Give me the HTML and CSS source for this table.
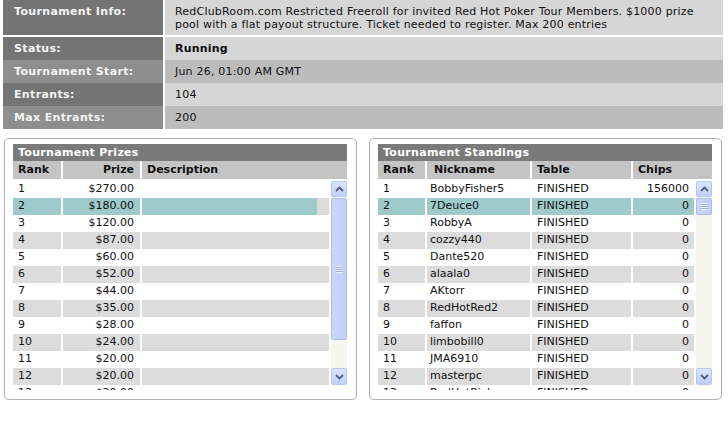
FILE: index.html
```html
<!DOCTYPE html>
<html>
<head>
<meta charset="utf-8">
<link rel="stylesheet" href="styles.css">
</head>
<body>
<div class="info-head">
  <div class="lbl dark">Tournament Info:</div>
  <div class="val light desc">RedClubRoom.com Restricted Freeroll for invited Red Hot Poker Tour Members. $1000 prize pool with a flat payout structure. Ticket needed to register. Max 200 entries</div>
</div>
<div class="info-body">
  <div class="lbl dark">Status:</div>
  <div class="val light bold">Running</div>
  <div class="lbl mid">Tournament Start:</div>
  <div class="val darker">Jun 26, 01:00 AM GMT</div>
  <div class="lbl dark">Entrants:</div>
  <div class="val light">104</div>
  <div class="lbl mid">Max Entrants:</div>
  <div class="val darker">200</div>
</div>

<div class="panels">
  <div class="panel prizes">
    <div class="ptitle">Tournament Prizes</div>
    <div class="cols chead"><div>Rank</div><div class="r">Prize</div><div>Description</div></div>
    <div class="pbody">
      <div class="rows">
        <div class="cols row"><div>1</div><div class="r">$270.00</div><div></div></div>
        <div class="cols row hl part"><div>2</div><div class="r">$180.00</div><div></div></div>
        <div class="cols row"><div>3</div><div class="r">$120.00</div><div></div></div>
        <div class="cols row g"><div>4</div><div class="r">$87.00</div><div></div></div>
        <div class="cols row"><div>5</div><div class="r">$60.00</div><div></div></div>
        <div class="cols row g"><div>6</div><div class="r">$52.00</div><div></div></div>
        <div class="cols row"><div>7</div><div class="r">$44.00</div><div></div></div>
        <div class="cols row g"><div>8</div><div class="r">$35.00</div><div></div></div>
        <div class="cols row"><div>9</div><div class="r">$28.00</div><div></div></div>
        <div class="cols row g"><div>10</div><div class="r">$24.00</div><div></div></div>
        <div class="cols row"><div>11</div><div class="r">$20.00</div><div></div></div>
        <div class="cols row g"><div>12</div><div class="r">$20.00</div><div></div></div>
        <div class="cols row"><div>13</div><div class="r">$20.00</div><div></div></div>
      </div>
      <div class="sbar">
        <div class="sbtn"><svg width="9" height="6" viewBox="0 0 9 6"><polyline points="1,5 4.5,1.5 8,5" fill="none" stroke="#4d6185" stroke-width="1.8"/></svg></div>
        <div class="thumb big"><span class="grip"></span></div>
        <div class="track"></div>
        <div class="sbtn"><svg width="9" height="6" viewBox="0 0 9 6"><polyline points="1,1 4.5,4.5 8,1" fill="none" stroke="#4d6185" stroke-width="1.8"/></svg></div>
      </div>
    </div>
  </div>

  <div class="panel standings">
    <div class="ptitle">Tournament Standings</div>
    <div class="cols chead"><div>Rank</div><div class="nick">Nickname</div><div>Table</div><div>Chips</div></div>
    <div class="pbody">
      <div class="rows">
        <div class="cols row"><div>1</div><div>BobbyFisher5</div><div>FINISHED</div><div class="r">156000</div></div>
        <div class="cols row hl"><div>2</div><div>7Deuce0</div><div>FINISHED</div><div class="r">0</div></div>
        <div class="cols row"><div>3</div><div>RobbyA</div><div>FINISHED</div><div class="r">0</div></div>
        <div class="cols row g"><div>4</div><div>cozzy440</div><div>FINISHED</div><div class="r">0</div></div>
        <div class="cols row"><div>5</div><div>Dante520</div><div>FINISHED</div><div class="r">0</div></div>
        <div class="cols row g"><div>6</div><div>alaala0</div><div>FINISHED</div><div class="r">0</div></div>
        <div class="cols row"><div>7</div><div>AKtorr</div><div>FINISHED</div><div class="r">0</div></div>
        <div class="cols row g"><div>8</div><div>RedHotRed2</div><div>FINISHED</div><div class="r">0</div></div>
        <div class="cols row"><div>9</div><div>faffon</div><div>FINISHED</div><div class="r">0</div></div>
        <div class="cols row g"><div>10</div><div>limbobill0</div><div>FINISHED</div><div class="r">0</div></div>
        <div class="cols row"><div>11</div><div>JMA6910</div><div>FINISHED</div><div class="r">0</div></div>
        <div class="cols row g"><div>12</div><div>masterpc</div><div>FINISHED</div><div class="r">0</div></div>
        <div class="cols row"><div>13</div><div>RedHotRich</div><div>FINISHED</div><div class="r">0</div></div>
      </div>
      <div class="sbar">
        <div class="sbtn"><svg width="9" height="6" viewBox="0 0 9 6"><polyline points="1,5 4.5,1.5 8,5" fill="none" stroke="#4d6185" stroke-width="1.8"/></svg></div>
        <div class="thumb small"><span class="grip"></span></div>
        <div class="track"></div>
        <div class="sbtn"><svg width="9" height="6" viewBox="0 0 9 6"><polyline points="1,1 4.5,4.5 8,1" fill="none" stroke="#4d6185" stroke-width="1.8"/></svg></div>
      </div>
    </div>
  </div>
</div>
</body>
</html>
```

FILE: styles.css
```css
* { box-sizing: border-box; }
body {
  margin: 0;
  background: #fff;
  font-family: "DejaVu Sans", Verdana, sans-serif;
  font-size: 11px;
  color: #111;
}
.info-head, .info-body {
  display: grid;
  grid-template-columns: 160px 558px;
  column-gap: 2px;
  margin-left: 3px;
  width: 720px;
}
.info-head { height: 35px; margin-bottom: 2px; }
.info-body { grid-auto-rows: 23px; }
.lbl {
  color: #f4f4f4;
  font-weight: bold;
  font-size: 11px;
  letter-spacing: 0.35px;
  padding-left: 11px;
  line-height: 23px;
}
.info-head .lbl { line-height: 14px; padding-top: 5px; }
.dark { background: #747474; }
.mid { background: #8e8e8e; }
.val { padding-left: 10px; line-height: 23px; letter-spacing: 0.2px; }
.light { background: #d6d6d6; }
.darker { background: #bcbcbc; }
.bold { font-weight: bold; }
.desc { line-height: 13px; padding-top: 5px; padding-right: 12px; }

.panels {
  display: flex;
  gap: 12px;
  margin: 9px 0 0 4px;
}
.panel {
  width: 353px;
  height: 262px;
  border: 1px solid #b2b2b2;
  border-radius: 5px;
  padding: 5px 9px 0 8px;
  box-shadow: 0 1px 1px rgba(0,0,0,0.08);
}
.ptitle {
  height: 17px;
  line-height: 17px;
  background: #7a7a7a;
  color: #fff;
  font-weight: bold;
  letter-spacing: 0.3px;
  padding-left: 5px;
}
.cols { display: grid; }
.prizes .cols { grid-template-columns: 50px 79px 1fr; }
.standings .cols { grid-template-columns: 49px 105px 101px 1fr; }
.cols > div {
  padding: 0 5px;
  white-space: nowrap;
  overflow: hidden;
}
.cols > div:not(:last-child) { border-right: 2px solid #fff; }
.cols > div.r { text-align: right; padding-right: 6px; }
.standings .cols > div.r { padding-right: 5px; }
.standings .row > div:nth-child(2) { padding-left: 3px; }
.chead > div.nick { padding-left: 7px; }
.chead {
  height: 18px;
  line-height: 18px;
  background: #c4c4c4;
  font-weight: bold;
  color: #111;
  margin-bottom: 2px;
}
.pbody {
  display: flex;
  height: 209px;
  overflow: hidden;
}
.rows { width: 316px; flex: none; }
.row { height: 17px; line-height: 16px; background: #fff; }
.row.g { background: #dcdcdc; }
.row.hl { background: #9ecaca; }
.row.hl.part { background: linear-gradient(to right, #9ecaca 0, #9ecaca 304px, #dcdcdc 304px); }
.sbar {
  width: 16px;
  height: 204px;
  margin-left: 2px;
  display: flex;
  flex-direction: column;
  background: #f6f5f0;
}
.sbtn {
  height: 16px;
  flex: none;
  border: 1px solid #b4c7f2;
  border-radius: 2px;
  background: linear-gradient(to bottom, #dbe5fe, #bccffb);
  display: flex;
  align-items: center;
  justify-content: center;
}
.sbtn:last-child { height: 17px; }
.thumb {
  flex: none;
  margin-top: 1px;
  border: 1px solid #a9bdee;
  border-radius: 2px;
  background: linear-gradient(to right, #c9d7fd, #bfcffb);
  display: flex;
  align-items: center;
  justify-content: center;
}
.thumb.big { height: 142px; }
.thumb.small { height: 17px; }
.grip {
  width: 7px;
  height: 7px;
  background: repeating-linear-gradient(to bottom, #eef3ff 0, #eef3ff 1px, #98aede 1px, #98aede 2px);
}
.track { flex: 1; }
```
